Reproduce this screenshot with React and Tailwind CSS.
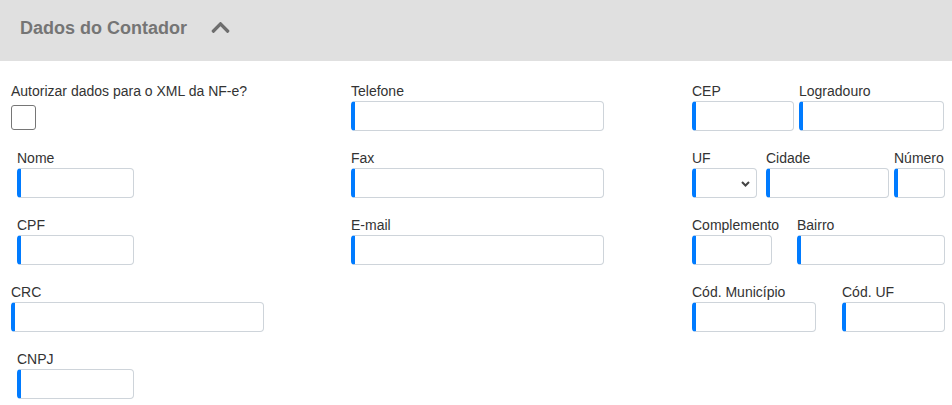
import React from 'react';
import { FaChevronUp } from 'react-icons/fa';

const font = { fontFamily: '"Liberation Sans", Arial, sans-serif' };

// campo de texto com borda azul na esquerda
const Field = ({ label, w, className = '', select = false }) => (
  <div className={`flex flex-col ${className}`} style={{ width: w }}>
    <label className="text-[14px] leading-[17px] pb-[1px] text-[#333333] whitespace-nowrap">{label}</label>
    <div className="relative h-[30px] w-full rounded-[4px] border border-[#ced4da] border-l-4 border-l-[#007bff] bg-white">
      {select && (
        <svg
          className="absolute right-[6px] top-[12px]"
          width="9"
          height="6"
          viewBox="0 0 9 6"
          fill="none"
        >
          <path d="M1 1l3.5 3.5L8 1" stroke="#444" strokeWidth="2" />
        </svg>
      )}
    </div>
  </div>
);

const App = () => {
  return (
    <div className="w-[952px] h-[405px] bg-white overflow-hidden" style={font}>
      {/* Cabeçalho */}
      <div className="h-[61px] bg-[#e0e0e0] flex items-start pt-[18px] pl-[20px]">
        <h2 className="text-[18px] leading-[21px] font-bold text-[#757575]">Dados do Contador</h2>
        <FaChevronUp size={21} className="ml-[23px] mt-[-1px] text-[#6e6e6e]" />
      </div>

      {/* Formulário */}
      <div className="flex pt-[22px] pl-[11px]">
        {/* Coluna 1 */}
        <div className="w-[340px] flex flex-col">
          <label className="text-[14px] leading-[17px] pb-[1px] text-[#333333]">Autorizar dados para o XML da NF-e?</label>
          <div className="mt-[4px] w-[25px] h-[25px] rounded-[3px] border border-[#767676] bg-white" />
          <Field label="Nome" w={117} className="ml-[6px] mt-[20px]" />
          <Field label="CPF" w={117} className="ml-[6px] mt-[19px]" />
          <Field label="CRC" w={253} className="mt-[19px]" />
          <Field label="CNPJ" w={117} className="ml-[6px] mt-[19px]" />
        </div>

        {/* Coluna 2 */}
        <div className="w-[253px] flex flex-col">
          <Field label="Telefone" w={253} />
          <Field label="Fax" w={253} className="mt-[19px]" />
          <Field label="E-mail" w={253} className="mt-[19px]" />
        </div>

        {/* Coluna 3 - endereço */}
        <div className="ml-[88px] w-[253px] flex flex-col">
          <div className="flex">
            <Field label="CEP" w={102} />
            <Field label="Logradouro" w={145} className="ml-[5px]" />
          </div>
          <div className="flex mt-[19px]">
            <Field label="UF" w={65} select />
            <Field label="Cidade" w={123} className="ml-[9px]" />
            <Field label="Número" w={51} className="ml-[5px]" />
          </div>
          <div className="flex mt-[19px]">
            <Field label="Complemento" w={80} />
            <Field label="Bairro" w={148} className="ml-[25px]" />
          </div>
          <div className="flex mt-[19px]">
            <Field label="Cód. Município" w={124} />
            <Field label="Cód. UF" w={103} className="ml-[26px]" />
          </div>
        </div>
      </div>
    </div>
  );
};

export default App;
